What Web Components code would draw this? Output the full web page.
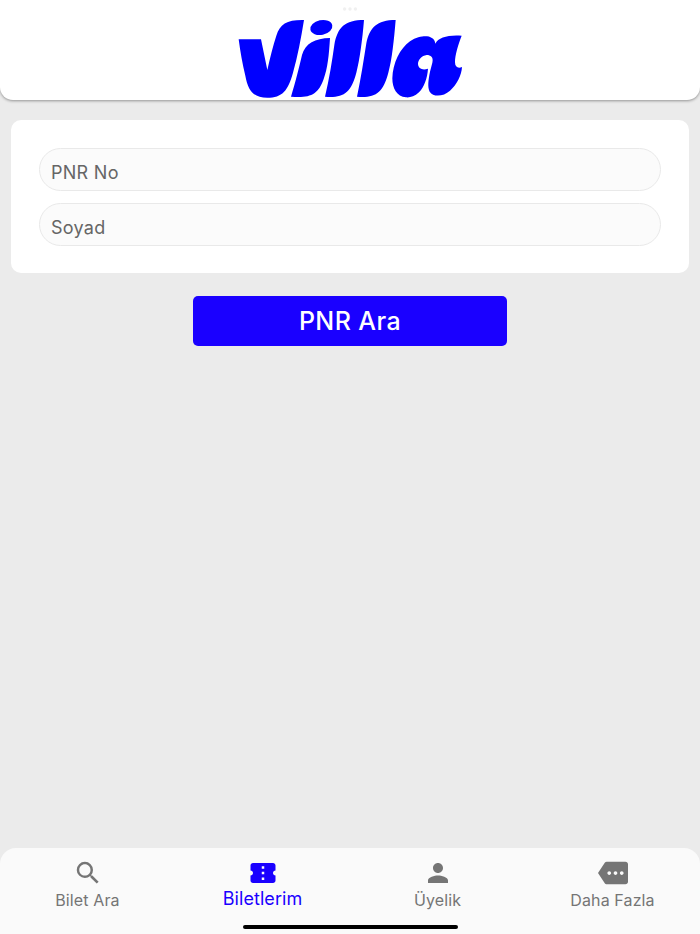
<!DOCTYPE html>
<html lang="tr">
<head>
<meta charset="utf-8">
<title>Villa</title>
<style>
html,body{margin:0;height:100%;background:#ebebeb;overflow:hidden}
body{font-family:Inter,"Liberation Sans",sans-serif}
</style>
</head>
<body>
<villa-app></villa-app>
<script>
const define=(name,html)=>customElements.define(name,class extends HTMLElement{
  constructor(){super();this.attachShadow({mode:'open'}).innerHTML=html;}
});

define('villa-header',`<style>
:host{display:flex;justify-content:center;position:relative;height:100.4px;background:#fff;border-radius:0 0 13px 13px;box-shadow:0 1px 3px rgba(0,0,0,.38);flex:none}
.logo{width:240px;height:100px;display:block}
.dots{position:absolute;left:342px;top:7px;width:16px;height:4px;display:block}
</style>
<svg class="dots" viewBox="0 0 16 4" fill="#f0f0f0"><circle cx="2.6" cy="2" r="1.7"/><circle cx="8" cy="2" r="1.7"/><circle cx="13.4" cy="2" r="1.7"/></svg>
<svg class="logo" viewBox="0 0 720 300" fill="#00f" role="img" aria-label="Villa">
<path d="M26 118H93L112 210C121 170 129 137 139 107C150 72 171 59 222 60C213 115 203 170 189 218C174 272 157 293 112 293C68 293 54 270 46 227C37 190 31 155 26 118Z"/>
<ellipse cx="274" cy="82.500" rx="33.500" ry="22" transform="rotate(-12 274 82.5)"/>
<path d="M183 290C197 245 208 200 216 165C226 130 255 115 300 114C297 165 293 205 281 237C264 286 240 294 183 290Z"/>
<path d="M285 290C298 235 306 185 313 135C322 82 345 60 402 60C397 120 389 180 379 218C363 280 340 294 285 290Z"/>
<path d="M381 290C393 235 401 180 409 130C419 83 440 60 497 60C492 120 486 180 475 218C459 280 436 294 381 290Z"/>
<path transform="translate(345)" d="M350 107C340 132 330 165 330 187C330 202 340 206 351 201C350 225 335 255 315 272C295 290 265 292 254 275C247 260 250 240 255 215L262 188C266 171 257 165 245 165C230 167 219 180 219 192C220 205 232 212 249 206C247 235 238 260 222 277C208 290 195 293 183 292C155 290 142 265 142 235C143 190 165 145 195 124C215 110 235 108 246 109C262 111 270 120 271 131C280 112 310 104 350 107Z"/>
</svg>`);

define('villa-card',`<style>
:host{display:flex;flex-direction:column;gap:12px;box-sizing:border-box;height:153.400px;margin:19.600px 11px 0;padding:28px;background:#fff;border-radius:10px}
</style><slot></slot>`);

define('villa-field',`<style>
:host{display:flex;flex:none;align-items:center;box-sizing:border-box;height:43px;padding:7px 11px 0;border:1px solid #e9e9e9;border-radius:22px;background:#fbfbfb;color:#666;font-size:18px;letter-spacing:.28px;line-height:24px}
</style><slot></slot>`);

define('villa-button',`<style>
:host{display:block;margin:22.600px auto 0;width:314.500px}
button{display:flex;align-items:center;justify-content:center;width:100%;height:50px;border:0;border-radius:5px;background:#1a00ff;color:#fff;font:500 25px/32px Inter,"Liberation Sans",sans-serif;letter-spacing:.42px;padding:1px 0 0}
</style><button><slot></slot></button>`);

const icons={
 search:'<path d="M15.500 14h-.79l-.28-.27A6.471 6.471 0 0 0 16 9.500 6.500 6.500 0 1 0 9.500 16c1.610 0 3.090-.59 4.230-1.570l.27.28v.79l5 4.990L20.490 19l-4.990-5zm-6 0C7.010 14 5 11.990 5 9.500S7.010 5 9.500 5 14 7.010 14 9.500 11.990 14 9.500 14z"/>',
 ticket:'<path d="M22 10V6c0-1.110-.9-2-2-2H4c-1.100 0-1.990.89-1.990 2v4c1.100 0 1.990.9 1.990 2s-.89 2-2 2v4c0 1.100.9 2 2 2h16c1.100 0 2-.9 2-2v-4c-1.100 0-2-.9-2-2s.9-2 2-2zm-9 7.500h-2v-2h2v2zm0-4.500h-2v-2h2v2zm0-4.500h-2v-2h2v2z"/>',
 person:'<path d="M12 12c2.210 0 4-1.790 4-4s-1.790-4-4-4-4 1.790-4 4 1.790 4 4 4zm0 2c-2.670 0-8 1.340-8 4v2h16v-2c0-2.660-5.330-4-8-4z"/>',
 more:'<path d="M22 3H7c-.69 0-1.230.35-1.590.88L0 12l5.410 8.110c.36.53.97.89 1.660.89H22c1.100 0 2-.9 2-2V5c0-1.100-.9-2-2-2zM9 13.500c-.83 0-1.500-.67-1.500-1.500s.67-1.500 1.500-1.500 1.500.67 1.500 1.500-.67 1.500-1.500 1.500zm5 0c-.83 0-1.500-.67-1.500-1.500s.67-1.500 1.500-1.500 1.500.67 1.500 1.500-.67 1.500-1.500 1.500zm5 0c-.83 0-1.500-.67-1.500-1.500s.67-1.500 1.500-1.500 1.500.67 1.500 1.500-.67 1.500-1.500 1.500z"/>'
};
customElements.define('villa-tab',class extends HTMLElement{
  constructor(){
    super();
    this.attachShadow({mode:'open'}).innerHTML=`<style>
:host{display:flex;flex:1 1 0;flex-direction:column;align-items:center;color:#757575;font-size:16px;letter-spacing:.12px;line-height:22px;padding-top:10px}
:host([active]){color:#1a00ff;font-size:18px;letter-spacing:.06px}
svg{width:30px;height:30px;display:block;fill:currentColor}
span{white-space:nowrap;margin-top:1px}
:host([active]) span{margin-top:0}
</style><svg viewBox="0 0 24 24">${icons[this.getAttribute('icon')]}</svg><span><slot></slot></span>`;
  }
});

define('villa-tabs',`<style>
:host{display:flex;flex-direction:column;flex:none;height:86px;margin-top:auto;background:#fafafa;border-radius:16px 16px 0 0}
nav{display:flex;height:76.500px}
.home{width:215px;height:4px;border-radius:2px;background:#000;margin:0 auto}
</style><nav><slot></slot></nav><div class="home"></div>`);

define('villa-app',`<style>
:host{display:flex;flex-direction:column;height:934px;width:700px}
</style>
<villa-header></villa-header>
<villa-card><villa-field>PNR No</villa-field><villa-field>Soyad</villa-field></villa-card>
<villa-button>PNR Ara</villa-button>
<villa-tabs>
<villa-tab icon="search">Bilet Ara</villa-tab>
<villa-tab icon="ticket" active>Biletlerim</villa-tab>
<villa-tab icon="person">Üyelik</villa-tab>
<villa-tab icon="more">Daha Fazla</villa-tab>
</villa-tabs>`);
</script>
</body>
</html>
